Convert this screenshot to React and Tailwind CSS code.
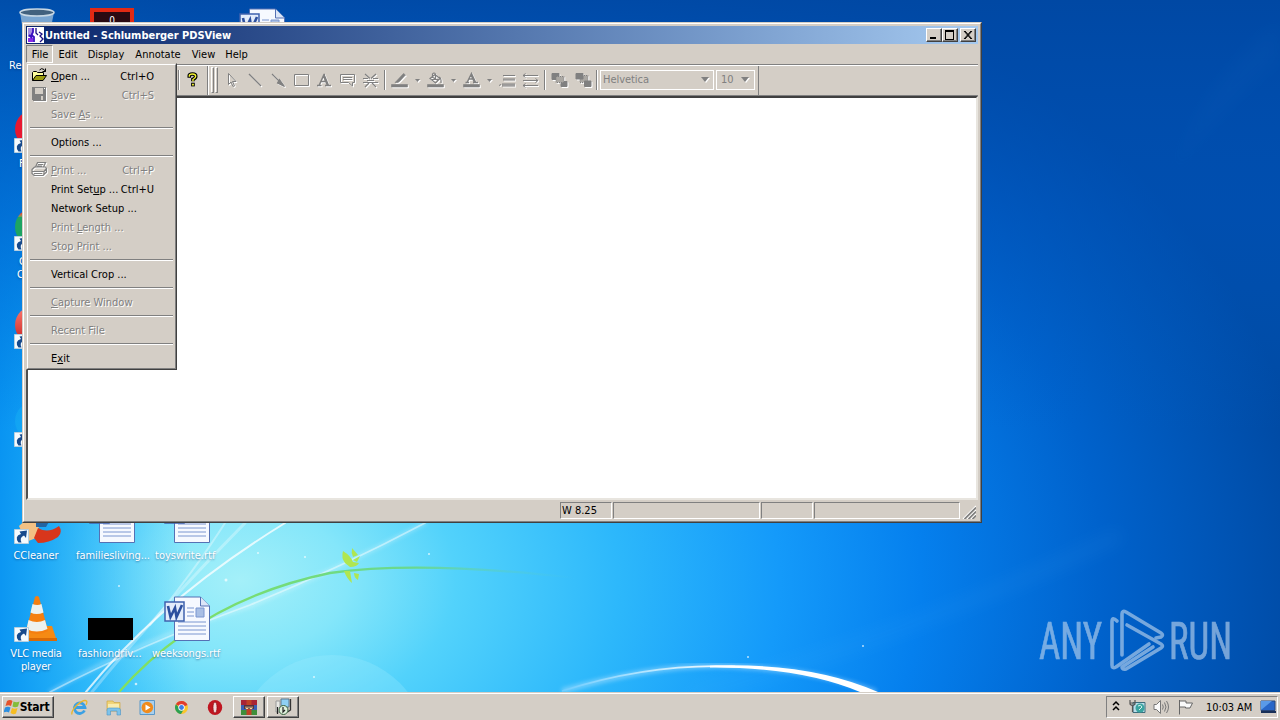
import React from 'react';
import clsx from 'clsx';

const menuBar = [
    { label: 'File', className: 'w-[27px] h-[18px] border border-t-[#808080] border-l-[#808080] border-b-white border-r-white pt-px pl-px' },
    { label: 'Edit', className: 'w-[30px] pt-px' },
    { label: 'Display', className: 'w-[46px] pt-px' },
    { label: 'Annotate', className: 'w-[58px] pt-px' },
    { label: 'View', className: 'w-[33px] pt-px' },
    { label: 'Help', className: 'w-[33px] pt-px' },
];

// "_" marks the accelerator letter
const fileMenu = [
    { label: '_Open ...', keys: 'Ctrl+O', icon: 'open' },
    { label: '_Save', keys: 'Ctrl+S', icon: 'save', disabled: true },
    { label: 'Save _As ...', disabled: true },
    null,
    { label: 'Options ...' },
    null,
    { label: '_Print ...', keys: 'Ctrl+P', icon: 'print', disabled: true },
    { label: 'Print Set_up ...', keys: 'Ctrl+U' },
    { label: 'Network Setup ...' },
    { label: 'Print _Length ...', disabled: true },
    { label: 'Stop Print ...', disabled: true },
    null,
    { label: 'Vertical Crop ...' },
    null,
    { label: '_Capture Window', disabled: true },
    null,
    { label: 'Recent File', disabled: true },
    null,
    { label: 'E_xit' },
];

const Accel = ({ text }) => {
    const i = text.indexOf('_');
    if (i < 0) return text;
    return (
        <>
            {text.slice(0, i)}
            <span className="underline underline-offset-1">{text[i + 1]}</span>
            {text.slice(i + 2)}
        </>
    );
};

const MenuIcon = ({ name }) => {
    if (name === 'open') {
        return (
            <svg width="17" height="16" viewBox="0 0 17 16">
                <path d="M1.500 13.500v-8l1-1h3l1 1h6v3" fill="#ffff9c" stroke="#000" />
                <path d="M1.500 13.500 5 8.500h10.500l-3.500 5z" fill="#9c9c10" stroke="#000" />
                <path d="M8.500 3q2-2.500 4.500-.5l1.500 2M14.500 1.500v3h-3" fill="none" stroke="#000" />
            </svg>
        );
    }
    if (name === 'save') {
        return (
            <svg width="17" height="16" viewBox="0 0 17 16" shapeRendering="crispEdges" className="drop-shadow-[1px_1px_0_#fff]">
                <path d="M1 1h14v14H2l-1-1z" fill="#808080" />
                <path d="M4 2h8v6H4zM10 10h2v4h-2z" fill="#d4cec6" />
                <path d="M13 2h1v1h-1z" fill="#fff" />
            </svg>
        );
    }
    return (
        <svg width="17" height="16" viewBox="0 0 17 16" className="drop-shadow-[1px_1px_0_#fff]">
            <path d="M4.500 6 6.500 1.500h8L12.500 6M1 8.500 3.500 6h11l1 1.500-2.500 3H1zM1 8.500v4l2 2h9l3.500-3.500V7.500M13 10.500v3M3 12.500h8M7 3.500h5M6 5h5" fill="none" stroke="#808080" strokeWidth="1.200" />
        </svg>
    );
};

const FileMenu = () => (
    <div className="absolute left-[26px] top-[63px] z-20 h-[307px] w-[151px] border border-t-[#d4cec6] border-l-[#d4cec6] border-r-[#404040] border-b-[#404040] bg-[#d4cec6]">
        <div className="h-full border border-t-white border-l-white border-r-[#808080] border-b-[#808080] p-px">
            {fileMenu.map((item, i) =>
                item ? (
                    <div
                        key={i}
                        className={clsx(
                            'flex h-[19px] items-center pr-[20px] whitespace-pre',
                            item.disabled ? 'text-[#808080] [text-shadow:1px_1px_0_#fff]' : 'text-black',
                        )}
                    >
                        <div className="w-[22px] pb-px pl-[2px]">{item.icon && <MenuIcon name={item.icon} />}</div>
                        <span className="flex-1 pt-[2px]"><Accel text={item.label} /></span>
                        {item.keys && <span className="pt-[2px]">{item.keys}</span>}
                    </div>
                ) : (
                    <div key={i} className="h-[9px] px-px pt-[4px]">
                        <div className="h-[2px] border-t border-b border-t-[#808080] border-b-white" />
                    </div>
                ),
            )}
        </div>
    </div>
);

const toolShapes = {
    pointer: <path d="M4.500 1.500v11l2.500-2.500 2 4.500 1.500-.7-2-4.300H12z" fill="none" />,
    line: <path d="m2 2 12 12" strokeWidth="1.400" />,
    arrow: <path d="m2 2 8 8M14.500 14.500l-5-7L7.500 11z" fill="#808080" strokeWidth="1.200" />,
    rect: <path d="M1.500 2.500h14v11h-14z" fill="none" />,
    text: <path d="M1 13.500h4.500M3.300 13 8 2.500l1 0M5 9.500h6M9 13.500h6M8 2.500l4.500 11M7.500 4l4 9.500" fill="none" strokeWidth="1.500" />,
    note: <path d="M1.500 2.500h14v8h-2v3.500l-4-3.500h-8zM4 5.500h9M4 7.500h9" fill="none" />,
    divide: <path d="M1 6.500h5M11 6.500h5M1 10.500h15M3 2l5 4.500M14 2 9 6.500M3 15l4-4M14 15l-4-4M5 8.500h7" fill="none" strokeWidth="1.200" />,
    pen: <path d="M.5 12.500h16v2.500H.5zM4 10.500l2-2 6.500-7L14.500 3 9 9l-2 1.500z" fill="#808080" strokeWidth=".6" />,
    bucket: (
        <>
            <path d="M.5 12.500h16v2.500H.5z" fill="#808080" strokeWidth=".6" />
            <path d="M3 6.500l5-4 5 4-4.500 4.500zM5.500 6V2q1.500-2 3 0v5M12 5q2.500 1 2 6M5 7.500h7M6 5.500l5 3" fill="none" strokeWidth="1.200" />
        </>
    ),
    fontColor: (
        <>
            <path d="M.5 12.500h16v2.500H.5z" fill="#808080" strokeWidth=".6" />
            <path d="M2.500 10.500h3.500M10 10.500h5M4.300 10 8.500 1.500l4.200 9M8 3l3.500 7.500M6 7h5" fill="none" strokeWidth="1.400" />
        </>
    ),
    weight: <path d="M4 3.500h12M4 7h12M4 8h12M3 12h13M3 13h13M3 14h13M.5 14l1-2" fill="none" />,
    style: <path d="M1 3.500h15M1 8.500h15M1 13.500h15M3.500 1.500 1 3.500l2.500 2M13.500 6.500 16 8.500l-2.500 2M3.500 11.500 1 13.500l2.500 2" fill="none" />,
    front: (
        <>
            <path d="M1 1.500h7v6H1zM10 9.500h6v5h-6z" fill="#808080" />
            <path d="M5 4.500h8v6H5z" fill="#aaa7a2" strokeDasharray="1 1" />
        </>
    ),
    back: (
        <>
            <path d="M5 3.500h8v7H5z" fill="#aaa7a2" strokeDasharray="1 1" />
            <path d="M1 1.500h7v5.500H1zM9.500 9h6.500v5.500H9.500z" fill="#808080" />
        </>
    ),
};

const Tool = ({ name, className = 'w-[23px]' }) => (
    <div className={clsx('flex h-[24px] shrink-0 items-center justify-center', className)}>
        <svg width="17" height="16" viewBox="0 0 17 16" stroke="#808080" className="drop-shadow-[1px_1px_0_#fff]">
            {toolShapes[name]}
        </svg>
    </div>
);

const Caret = () => (
    <svg width="8" height="5" viewBox="0 0 8 5" className="mb-px shrink-0 drop-shadow-[1px_1px_0_#fff]">
        <path d="M0 0h8L4 5z" fill="#808080" />
    </svg>
);

const SmallCaret = ({ className = 'w-[13px]' }) => (
    <div className={clsx('flex shrink-0 justify-center', className)}>
        <svg width="5" height="3" viewBox="0 0 5 3" className="drop-shadow-[1px_1px_0_#fff]">
            <path d="M0 0h5L2.500 3z" fill="#808080" />
        </svg>
    </div>
);

const Divider = ({ className = '' }) => (
    <div className={clsx('h-[20px] w-[2px] shrink-0 border-l border-r border-l-[#808080] border-r-white', className)} />
);

const Grip = () => (
    <div className="h-[26px] w-[3px] border border-t-white border-l-white border-r-[#808080] border-b-[#808080]" />
);

const Toolbar = () => (
    <div className="flex h-[30px] items-center border-b border-b-[#808080] pb-px pl-[152px]">
        <Divider />
        <div className="flex w-[27px] shrink-0 justify-center pr-[3px] pb-[2px]">
            <svg width="11" height="15" viewBox="0 0 12 16">
                <path d="M2.500 6V4q0-2 3.500-2t3.500 2.500Q9.500 6.500 6.500 8v2" fill="none" stroke="#000" strokeWidth="4" />
                <path d="M4.500 11.500h4v4h-4z" fill="#000" />
                <path d="M2.500 5V4q0-2 3.500-2t3.500 2.500Q9.500 6.500 6.500 8v2" fill="none" stroke="#f4f431" strokeWidth="1.500" />
                <path d="M5.500 12.500h2v2h-2z" fill="#f4f431" />
            </svg>
        </div>
        <div className="h-[29px] w-[2px] border-l border-r border-l-[#808080] border-r-white" />
        <div className="flex gap-px pr-[3px] pl-[2px]">
            <Grip />
            <Grip />
        </div>
        <Tool name="pointer" />
        <Tool name="line" />
        <Tool name="arrow" />
        <Tool name="rect" />
        <Tool name="text" />
        <Tool name="note" />
        <Tool name="divide" />
        <Divider className="mx-[2px]" />
        <Tool name="pen" />
        <SmallCaret />
        <Tool name="bucket" />
        <SmallCaret />
        <Tool name="fontColor" />
        <SmallCaret className="w-[12px]" />
        <Tool name="weight" className="w-[24px]" />
        <Tool name="style" />
        <Divider className="mx-[2px]" />
        <Tool name="front" />
        <Tool name="back" className="w-[24px]" />
        <Divider className="mr-[2px] ml-px" />
        <div className="flex h-[20px] w-[114px] shrink-0 items-center justify-between border border-white pr-[4px] pl-[2px] text-[#808080]">
            <span className="tracking-[-0.05px]">Helvetica</span>
            <Caret />
        </div>
        <div className="ml-[2px] flex h-[20px] w-[39px] shrink-0 items-center justify-between border border-white pr-[5px] pl-[4px] text-[#808080]">
            10
            <Caret />
        </div>
        <div className="ml-[3px] h-[29px] w-px bg-[#808080]" />
    </div>
);

const CaptionButton = ({ children, className = '' }) => (
    <div className={clsx('flex h-[14px] w-[16px] items-center justify-center border border-t-white border-l-white border-r-[#404040] border-b-[#404040] bg-[#d4cec6] shadow-[inset_-1px_-1px_0_#808080]', className)}>
        <svg width="12" height="10" viewBox="0 0 12 10" shapeRendering="crispEdges" fill="none" stroke="#000">
            {children}
        </svg>
    </div>
);

const TitleBar = () => (
    <div className="flex h-[18px] shrink-0 items-center bg-linear-to-r from-[#0a246a] to-[#a6caf0] pr-[2px] pl-px">
        <svg width="17" height="16" viewBox="0 0 17 16" className="shrink-0">
            <path d="M0 0h17v16H0z" fill="#fff" />
            <path d="M1 1h5v9H1z" fill="#a890e0" />
            <path d="M1 11h5v4H1z" fill="#8a2be8" />
            <path d="M6 1v4L4.500 8 7 10v5M2 8l3 3" fill="none" stroke="#3a10c0" strokeWidth="1.800" />
            <path d="M9 1v5l2 2M12 5l3 2-2 2 3 3-3 3" fill="none" stroke="#1c1080" strokeWidth="1.300" />
        </svg>
        <span className="flex-1 pt-px pl-px font-bold tracking-[-0.03px] whitespace-nowrap text-white">Untitled - Schlumberger PDSView</span>
        <CaptionButton><path d="M2 8h6M2 7h6" /></CaptionButton>
        <CaptionButton><path d="M1.500 1v8.500h8V1M1 1h9M1 .5h9" /></CaptionButton>
        <CaptionButton className="ml-[2px]"><path d="m2 1 7 8M3 1l7 8M9 1 2 9M10 1 3 9" shapeRendering="auto" /></CaptionButton>
    </div>
);

const StatusPane = ({ className, children }) => (
    <div className={clsx('h-[17px] border border-t-[#808080] border-l-[#808080] border-r-white border-b-white pl-px leading-[16px]', className)}>{children}</div>
);

const AppWindow = () => (
    <div className="absolute top-[22px] left-[22px] z-10 h-[501px] w-[960px] border border-t-[#d4cec6] border-l-[#d4cec6] border-r-[#404040] border-b-[#404040] bg-[#d4cec6]">
        <div className="flex h-full flex-col border border-t-white border-l-white border-r-[#808080] border-b-[#808080] px-[2px] pt-[2px] pb-[2px]">
            <TitleBar />
            <div className="flex h-[20px] items-center text-black">
                {menuBar.map((item) => (
                    <div key={item.label} className={clsx('flex items-center justify-center', item.className)}>{item.label}</div>
                ))}
            </div>
            <div className="h-[2px] border-t border-b border-t-[#808080] border-b-white" />
            <Toolbar />
            <div className="flex-1 border-t-2 border-r-2 border-b-2 border-l-2 border-t-[#404040] border-r-[#e8e5df] border-b-[#e8e5df] border-l-[#505050] bg-white" />
            <div className="flex h-[19px] items-end justify-end gap-px pr-[2px]">
                <StatusPane className="w-[52px]">W 8.25</StatusPane>
                <StatusPane className="w-[147px]" />
                <StatusPane className="w-[52px]" />
                <StatusPane className="w-[146px]" />
                <svg width="14" height="14" viewBox="0 0 14 14" className="ml-px">
                    <path d="M1 14 14 1M5 14l9-9M9 14l5-5" stroke="#fff" strokeWidth="1.200" />
                    <path d="M2.500 14 14 2.500M6.500 14 14 6.500M10.500 14l3.500-3.500" stroke="#808080" strokeWidth="1.700" />
                </svg>
            </div>
        </div>
    </div>
);

const Wallpaper = () => (
    <svg width="1280" height="692" viewBox="0 0 1280 692" className="absolute top-0 left-0">
        <defs>
            <radialGradient id="glow" gradientUnits="userSpaceOnUse" cx="0" cy="0" r="1080" gradientTransform="translate(240 580) scale(1 .68)">
                <stop offset="0" stopColor="#a4f0f9" />
                <stop offset=".1" stopColor="#84e6fa" />
                <stop offset=".2" stopColor="#52d2fb" />
                <stop offset=".35" stopColor="#2db8fb" />
                <stop offset=".5" stopColor="#149afa" />
                <stop offset=".63" stopColor="#0580ee" />
                <stop offset=".8" stopColor="#0062cc" />
                <stop offset="1" stopColor="#0049a2" />
            </radialGradient>
            <linearGradient id="leftShade" x1="0" x2="1" y1="0" y2="0">
                <stop offset="0" stopColor="#008cf0" stopOpacity=".85" />
                <stop offset="1" stopColor="#00a8ff" stopOpacity="0" />
            </linearGradient>
            <linearGradient id="topShade" x1="0" x2="0" y1="0" y2="1">
                <stop offset="0" stopColor="#0048a4" stopOpacity=".9" />
                <stop offset=".5" stopColor="#0054bc" stopOpacity=".5" />
                <stop offset="1" stopColor="#0060c8" stopOpacity="0" />
            </linearGradient>
            <linearGradient id="stem" x1="0" x2="1" y1="0" y2="0">
                <stop offset="0" stopColor="#84e05c" />
                <stop offset=".65" stopColor="#68d890" />
                <stop offset="1" stopColor="#50c8e0" stopOpacity="0" />
            </linearGradient>
            <linearGradient id="arc" x1="0" x2="1" y1="0" y2="0">
                <stop offset="0" stopColor="#6fcdff" />
                <stop offset="1" stopColor="#fff" />
            </linearGradient>
            <filter id="soft"><feGaussianBlur stdDeviation="2" /></filter>
            <filter id="softer"><feGaussianBlur stdDeviation="9" /></filter>
        </defs>
        <path d="M0 0h1280v692H0z" fill="url(#glow)" />
        <path d="M0 0h190v692H0z" fill="url(#leftShade)" />
        <path d="M0 0h1280v430H0z" fill="url(#topShade)" />
        <path d="M1280 20v40q-70 60-110 120Q1200 80 1280 20z" fill="#2b7fd0" opacity=".06" filter="url(#softer)" />
        <path d="M690 695Q900 640 1120 535" fill="none" stroke="#6bc4ff" strokeWidth="6" opacity=".16" filter="url(#softer)" />
        <circle cx="332" cy="751" r="96" fill="#a8eeff" opacity=".25" />
        <g fill="none" stroke="#fff" strokeLinecap="round">
            <path d="M50 692Q140 640 250 606 340 568 425 523" strokeWidth="3" opacity=".35" filter="url(#soft)" />
            <path d="M50 692Q140 645 250 605 340 568 425 523" strokeWidth="1.800" opacity=".45" />
            <path d="M86 692Q160 600 285 523" strokeWidth="2" opacity=".75" />
            <path d="M92 692Q150 620 245 523" strokeWidth="3" opacity=".3" />
            <path d="M150 625Q195 570 225 523" strokeWidth="2" opacity=".35" />
        </g>
        <path d="M119 692Q200 600 330 573 420 560 575 578" fill="none" stroke="url(#stem)" strokeWidth="2.300" />
        <g fill="#b0e650">
            <path d="M343 551q-2 7 2 12l5 4q7 0 9-4l-6-1q-2-6-10-11zM352 548q-1 5 1 9l5-2zM353 560l7-4-3 6z" />
            <path d="M344 571h6l2 12q-5-4-8-12zM354 573l5 1-1 6q-4-2-4-7z" />
        </g>
        <path d="M562 691Q670 660 745 667 820 671 876 692" fill="none" stroke="#bfe6ff" strokeWidth="5" opacity=".5" filter="url(#soft)" />
        <path d="M562 691Q650 663 735 666.500" fill="none" stroke="url(#arc)" strokeWidth="1.700" />
        <path d="M710 665.700Q810 662 878 692h-18Q800 667 710 667.500z" fill="#fff" />
        <g fill="#fff" opacity=".7">
            <circle cx="226" cy="580" r="1.500" /><circle cx="305" cy="557" r="1" /><circle cx="258" cy="553" r="1" />
            <circle cx="429" cy="554" r="1" /><circle cx="136" cy="684" r="1.300" /><circle cx="119" cy="586" r="1" />
            <circle cx="748" cy="657" r="1" /><circle cx="863" cy="646" r="1" /><circle cx="314" cy="677" r="1" />
        </g>
    </svg>
);

const Shortcut = ({ className = '' }) => (
    <svg width="15" height="15" viewBox="0 0 15 15" className={clsx('absolute', className)}>
        <path d="M.5.5h14v14H.5z" fill="#f4fafe" stroke="#b7cfdf" />
        <path d="M4.500 13.500Q0 7 7 5L5.500 2.500l7.500-1-1 7.500-2-2.500Q5 8.500 7.500 13.500z" fill="#174a8c" />
    </svg>
);

const WordDoc = ({ className = '' }) => (
    <svg width="48" height="46" viewBox="0 0 48 46" className={clsx('absolute', className)}>
        <path d="M10.500 1h26l9 9v34.500h-35z" fill="#f6f9ff" stroke="#5571b4" />
        <path d="M36.500 1v9h9" fill="#dce6f8" stroke="#5571b4" />
        <path d="M23 12h7M23 16h7M23 20h7M14 26h28M14 30h28M14 34h28M14 38h28" stroke="#7b96d0" />
        <path d="M32 12h8v9h-8z" fill="#a9bfe4" stroke="#7b96d0" />
        <path d="M1 6h19v19H1z" fill="#e3ecfb" stroke="#3f62ae" strokeWidth="1.500" />
        <path d="m4 10 2.500 11L11 12l1.500 9L18 9" fill="none" stroke="#2c4f9e" strokeWidth="2.600" />
    </svg>
);

const Label = ({ className, children }) => (
    <div className={clsx('absolute text-center leading-[13px] whitespace-pre text-white [text-shadow:0_1px_2px_rgba(0,40,100,0.5)]', className)}>{children}</div>
);

const DesktopIcons = () => (
    <div>
        <svg width="36" height="30" viewBox="0 0 36 30" className="absolute top-[8px] left-[19px]">
            <path d="m1 4 4 26h25l5-26z" fill="#8fb4d6" opacity=".85" />
            <ellipse cx="18" cy="4.500" rx="17" ry="3.500" fill="#42617e" stroke="#c9d8e4" strokeWidth="1.500" />
        </svg>
        <Label className="top-[59px] left-[9px]">Re</Label>
        <div className="absolute top-[8px] left-[90px] flex h-[30px] w-[44px] justify-center border-4 border-[#e22a14] bg-[#2a0a12] pt-[3px] text-[10px] leading-[12px] text-white">0</div>
        <WordDoc className="top-[8px] left-[239px]" />

        <div className="absolute top-[110px] left-[15px] h-[38px] w-[38px] rounded-full bg-[#e81830]" />
        <Shortcut className="top-[138px] left-[14px]" />
        <Label className="top-[157px] left-[19px]">F</Label>
        <div className="absolute top-[208px] left-[15px] h-[38px] w-[38px] rounded-full bg-linear-to-b from-[#e04a30] from-15% to-[#1da462] to-25%" />
        <Shortcut className="top-[236px] left-[14px]" />
        <Label className="top-[255px] left-[19px]">G</Label>
        <Label className="top-[268px] left-[17px]">C</Label>
        <div className="absolute top-[306px] left-[15px] h-[38px] w-[38px] rounded-full bg-linear-to-b from-[#ff7a70] to-[#c4101c]" />
        <Shortcut className="top-[334px] left-[14px]" />
        <div className="absolute top-[402px] left-[15px] h-[38px] w-[38px] rounded-full bg-[#18b4f4] opacity-40" />
        <Shortcut className="top-[432px] left-[14px]" />

        <svg width="48" height="44" viewBox="0 0 48 44" className="absolute top-[500px] left-[14px]">
            <path d="M5 26Q12 18 26 22l-4 16-10 4z" fill="#f2c184" />
            <path d="M22 20h14l-4 7H22z" fill="#2465a2" />
            <path d="M24 28q10 6 21-2 4 6-1 11-9 6-20 6l-4-5z" fill="#d8361c" />
        </svg>
        <Shortcut className="top-[529px] left-[14px]" />
        <Label className="top-[549px] left-0 w-[72px]">CCleaner</Label>
        <WordDoc className="top-[498px] left-[89px]" />
        <Label className="top-[549px] left-[76px] tracking-[-0.05px]">familiesliving...</Label>
        <WordDoc className="top-[498px] left-[164px]" />
        <Label className="top-[549px] left-[155px]">toyswrite.rtf</Label>

        <svg width="38" height="46" viewBox="0 0 38 46" className="absolute top-[596px] left-[20px]">
            <path d="M8 30h24l5 15H3z" fill="#f58a14" />
            <path d="M3 42h34v3H3z" fill="#d96a06" />
            <path d="M15 1q2-2 4 0l9 34q-11 6-22 0z" fill="#f57f10" />
            <path d="m12.500 8-2 8.500q6 3 13 0L21.500 8q-4 2-9 0zM8.500 24 6.500 33q10 5 21 0l-2.500-9q-8 4-16.500 0z" fill="#edf1ee" />
        </svg>
        <Shortcut className="top-[627px] left-[14px]" />
        <Label className="top-[647px] left-0 w-[72px] tracking-[-0.2px]">{'VLC media\nplayer'}</Label>
        <div className="absolute top-[618px] left-[88px] h-[22px] w-[45px] bg-black" />
        <Label className="top-[647px] left-[78px]">fashiondriv...</Label>
        <WordDoc className="top-[596px] left-[164px]" />
        <Label className="top-[647px] left-[152px] tracking-[-0.1px]">weeksongs.rtf</Label>
    </div>
);

const Watermark = () => (
    <svg width="220" height="72" viewBox="0 0 220 72" className="absolute top-[608px] left-[1036px] overflow-visible" opacity=".65">
        <g fill="#b5d0ec" stroke="#b5d0ec" strokeWidth=".7" fontFamily="Roboto, sans-serif" fontSize="51" fontWeight="400">
            <text x="3" y="51" textLength="63" lengthAdjust="spacingAndGlyphs">ANY</text>
            <text x="133" y="51" textLength="63" lengthAdjust="spacingAndGlyphs">RUN</text>
        </g>
        <g fill="none" stroke="#b5d0ec" strokeWidth="3.600" strokeLinejoin="round" strokeLinecap="round">
            <path d="M81 13q-5-5-5 1v43q0 4 4 2L113 36" />
            <path d="M86 47V6q0-4 4-2l35 21q3 2 0 4l-5 1" />
            <path d="m91 17 34 19q3 2 0 4L90 61q-4 1-4-2l31-20" />
        </g>
    </svg>
);

const TaskButton = ({ className, children }) => (
    <div className={clsx('flex h-[22px] items-center justify-center border border-t-white border-l-white border-r-[#404040] border-b-[#404040] shadow-[inset_-1px_-1px_0_#808080]', className)}>{children}</div>
);

const QuickIcon = ({ children }) => (
    <div className="flex w-[34px] justify-center">
        <svg width="17" height="17" viewBox="0 0 17 17">{children}</svg>
    </div>
);

const Taskbar = () => (
    <div className="relative z-30 flex h-[28px] border-t border-t-[#d4cec6] bg-[#d4cec6] text-black">
        <div className="flex flex-1 items-center border-t border-t-white pr-[2px] pl-[2px]">
            <TaskButton className="w-[52px] pr-[3px] font-bold">
                <svg width="17" height="16" viewBox="0 0 17 16" className="shrink-0">
                    <path d="M3 2q3-2 5.500 0L7 7Q4.500 5.500 1.500 7z" fill="#e6532b" />
                    <path d="M9.500 2.500q3 1.500 6 0L14 7.500q-3 1.500-5.500 0z" fill="#83bd3c" />
                    <path d="M1 8.500q3-1.500 5.500 0L5 13.500Q2.500 12-.5 13.500z" fill="#2d8fe0" />
                    <path d="M8 9q2.500 1.500 5.500 0L12 14.500q-3 1.500-5.500-.5z" fill="#f6bd22" />
                </svg>
                <span className="-ml-px text-[12px] tracking-[-0.2px]">Start</span>
            </TaskButton>
            <div className="flex w-[179px] pl-[8px]">
                <QuickIcon>
                    <path d="M13.500 11.500A5.300 5.300 0 1 1 14 8.500H4" fill="none" stroke="#3aa0e4" strokeWidth="2.800" />
                    <path d="M1 15.500Q0 12 6 6 13 0 15.500 2q1 1-.5 4" fill="none" stroke="#e9b52c" strokeWidth="1.300" />
                </QuickIcon>
                <QuickIcon>
                    <path d="M2 2h6l1 1.500h6V12H2z" fill="#f0d478" stroke="#cfa844" strokeWidth=".7" />
                    <path d="M3 5h11v6H3z" fill="#f9ebae" />
                    <path d="M2 16V11q0-2 2-2h9q2.500 0 2.500 2v5h-3.500v-4H5.500v4z" fill="#7ec3ea" stroke="#4c93c8" strokeWidth=".6" />
                </QuickIcon>
                <QuickIcon>
                    <path d="M1 1.500h14.500v14H1z" fill="#a9d0ee" stroke="#5a98c9" />
                    <circle cx="8.300" cy="8.500" r="5.800" fill="#f08b1c" />
                    <path d="m6.500 5.500 5 3-5 3z" fill="#fff" />
                </QuickIcon>
                <QuickIcon>
                    <circle cx="8.500" cy="8.500" r="6.500" fill="#f9c52c" />
                    <path d="M8.500 8.500 2.900 5.200A6.500 6.500 0 0 1 14.500 6z" fill="#e03c2e" />
                    <path d="M2.900 5.200A6.500 6.500 0 0 0 8 15l3-5-4-.5z" fill="#2ba052" />
                    <circle cx="8.500" cy="8.500" r="3.200" fill="#fff" />
                    <circle cx="8.500" cy="8.500" r="2.400" fill="#3d7de6" />
                </QuickIcon>
                <QuickIcon>
                    <ellipse cx="8" cy="8.500" rx="7.200" ry="7.500" fill="#c01620" />
                    <ellipse cx="8" cy="8.500" rx="2" ry="5.500" fill="#f3dada" stroke="#8a0b13" strokeWidth=".7" />
                </QuickIcon>
            </div>
            <TaskButton className="w-[32px]">
                <svg width="18" height="17" viewBox="0 0 18 17">
                    <path d="M1 1h16v5H1z" fill="#a82436" />
                    <path d="M1 6h16v5H1z" fill="#3a5fb4" />
                    <path d="M1 11h16v5H1z" fill="#3f8f3c" />
                    <path d="M6.500 1h5v15h-5z" fill="#c04226" />
                    <path d="M4 6h10v4H4z" fill="#55323c" />
                    <path d="M6 7.500v2h2v-2m2 0v2h2v-2" fill="none" stroke="#f2d6a0" />
                </svg>
            </TaskButton>
            <TaskButton className="ml-[2px] w-[32px]">
                <svg width="18" height="18" viewBox="0 0 18 18">
                    <path d="M7 1h8v8H7z" fill="#8fd0f4" stroke="#5a7890" />
                    <path d="M16.500 1v11l-3 2" fill="none" stroke="#333" strokeWidth="1.300" />
                    <path d="M2 3h4v11H2z" fill="#e8e8e4" stroke="#999" />
                    <circle cx="9.500" cy="12" r="4.500" fill="#dff0dc" stroke="#35603c" />
                    <path d="M3.500 9v7M9 9v5l2-2" fill="none" stroke="#222" strokeWidth="1.200" />
                </svg>
            </TaskButton>
            <div className="ml-auto flex h-[22px] w-[172px] items-center border border-t-[#808080] border-l-[#808080] border-r-white border-b-white pl-[5px]">
                <svg width="8" height="12" viewBox="0 0 8 12" className="mb-[3px] shrink-0" fill="none" stroke="#000" strokeWidth="1.500">
                    <path d="m1 5 3-3 3 3M1 10l3-3 3 3" />
                </svg>
                <svg width="17" height="16" viewBox="0 0 17 16" className="ml-[9px] shrink-0">
                    <path d="M4 3.500h12v10H4z" fill="#b9dde8" stroke="#3c6d7c" />
                    <circle cx="11" cy="9" r="4.500" fill="#3aa4a0" />
                    <path d="M9 7q3-2 4 1l-3 3" fill="none" stroke="#d7f0ea" />
                    <path d="M1 1v4q2.500 3 5 0V1M3.500 6v7M1 4h5" fill="none" stroke="#555" strokeWidth="1.200" />
                </svg>
                <svg width="17" height="16" viewBox="0 0 17 16" className="ml-[7px] shrink-0" fill="none" stroke="#777">
                    <path d="M1 5.500h2.500L7.500 1.500v13l-4-4H1z" fill="#fafafa" />
                    <path d="M9.500 5.500q1.500 2.500 0 5M11.500 3.500q3 4.500 0 9M13.500 2q4 6 0 12" />
                </svg>
                <svg width="17" height="16" viewBox="0 0 17 16" className="ml-[7px] shrink-0" fill="#fafafa" stroke="#666">
                    <path d="M2.500 1v14.500M2.500 2h6.500v2h6.500l-2.500 5H8.500V8h-6" />
                </svg>
                <span className="ml-[12px] w-[48px] pt-px tracking-[-0.1px] whitespace-nowrap">10:03 AM</span>
                <svg width="17" height="14" viewBox="0 0 17 14" className="ml-[6px] shrink-0">
                    <path d="M1 1h14v9.500H1z" fill="#2866c8" stroke="#294779" />
                    <path d="M1 10 12 1H1z" fill="#5a9ae8" />
                    <path d="M1 12h15" stroke="#183058" strokeWidth="2" />
                </svg>
            </div>
        </div>
    </div>
);

const App = () => {
    return (
        <div className="relative flex h-[720px] w-[1280px] flex-col overflow-hidden bg-[#0064d0] font-['DejaVu_Sans_Condensed','DejaVu_Sans',sans-serif] text-[11px] leading-[14px] [font-stretch:condensed]">
            <div className="relative flex-1">
                <Wallpaper />
                <DesktopIcons />
                <Watermark />
                <AppWindow />
                <FileMenu />
            </div>
            <Taskbar />
        </div>
    );
};
export default App;
